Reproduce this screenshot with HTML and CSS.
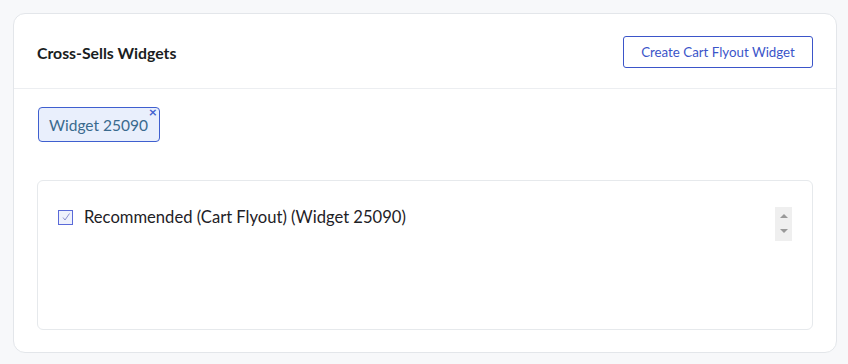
FILE: index.html
```html
<!DOCTYPE html>
<html>
<head>
<meta charset="utf-8">
<link rel="stylesheet" href="styles.css">
</head>
<body>
<div class="card">
  <div class="card-header">
    <h2 class="title">Cross-Sells Widgets</h2>
    <button class="btn-outline">Create Cart Flyout Widget</button>
  </div>
  <div class="card-body">
    <div class="chips">
      <span class="chip">Widget 25090<span class="chip-x">×</span></span>
    </div>
    <div class="list-box">
      <label class="item">
        <span class="checkbox"><svg width="10" height="10" viewBox="0 0 10 10"><path d="M2 5.5 L4 8 L8.5 1.5" fill="none" stroke="#8a8fd0" stroke-width="1"/></svg></span>
        <span class="item-text">Recommended (Cart Flyout) (Widget 25090)</span>
      </label>
      <div class="spinner"><span class="up"></span><span class="down"></span></div>
    </div>
  </div>
</div>
</body>
</html>
```
FILE: styles.css
```css
html, body { margin: 0; padding: 0; }
body {
  background: #f7f8fa;
  font-family: Lato, "Noto Sans", sans-serif;
  padding: 13px 11px 11px 13px;
  width: 848px;
  height: 364px;
  box-sizing: border-box;
}
.card {
  background: #fff;
  border: 1px solid #e3e6ea;
  border-radius: 12px;
  height: 340px;
  box-sizing: border-box;
}
.card-header {
  display: flex;
  align-items: center;
  justify-content: space-between;
  height: 74px;
  padding: 0 23px 0 23px;
  border-bottom: 1px solid #eceef1;
}
.title {
  margin: 0;
  font-size: 15.8px;
  font-weight: 700;
  color: #1a1d21;
  padding-top: 2px;
}
.btn-outline {
  font-family: Lato, "Noto Sans", sans-serif;
  font-size: 13.3px;
  color: #3b55c9;
  background: #fff;
  border: 1px solid #3b55c9;
  border-radius: 3px;
  width: 190px;
  height: 32px;
  padding: 0;
  margin-top: 1px;
}
.card-body {
  padding: 18px 23px 0 23px;
}
.chips { display: flex; }
.chip {
  position: relative;
  display: inline-flex;
  align-items: center;
  height: 35px;
  box-sizing: border-box;
  padding: 0 11px 0 10px;
  background: #e9effc;
  border: 1px solid #3f5fcf;
  border-radius: 4px;
  color: #3a6a8e;
  font-size: 15.5px;
  margin-left: 1px;
}
.chip-x {
  position: absolute;
  top: -3px;
  right: 2px;
  font-size: 14px;
  font-weight: 700;
  color: #3f5fcf;
  line-height: 14px;
}
.list-box {
  position: relative;
  margin-top: 38px;
  height: 150px;
  box-sizing: border-box;
  border: 1px solid #e6e9ec;
  border-radius: 6px;
  padding: 26px 20px 0 20px;
}
.item {
  display: flex;
  align-items: center;
  gap: 11px;
}
.checkbox {
  width: 13px;
  height: 13px;
  border: 1px solid #5a6ad8;
  background: #eef1fc;
  display: flex;
  align-items: center;
  justify-content: center;
}
.item-text {
  font-size: 16.6px;
  color: #1e2126;
}
.spinner {
  position: absolute;
  top: 26px;
  right: 20px;
  width: 17px;
  height: 34px;
  background: #efefef;
}
.spinner .up, .spinner .down {
  position: absolute;
  left: 5px;
  width: 0; height: 0;
  border-left: 4px solid transparent;
  border-right: 4px solid transparent;
}
.spinner .up { top: 7px; border-bottom: 4px solid #999; }
.spinner .down { top: 22px; border-top: 4px solid #999; }
```
